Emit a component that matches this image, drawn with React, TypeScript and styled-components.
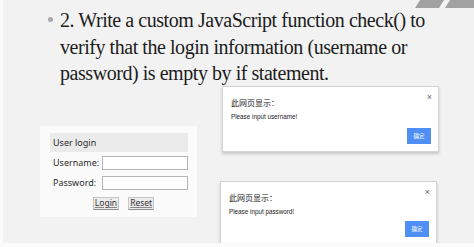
import styled, { createGlobalStyle } from "styled-components";

const GlobalStyle = createGlobalStyle`
  html, body {
    margin: 0;
    padding: 0;
    background: #ffffff;
  }
`;

const Slide = styled.div`
  position: relative;
  width: 474px;
  height: 247px;
  box-sizing: border-box;
  background: #f2f2f2;
  border-left: 3px solid #fbfbfb;
  border-bottom: 4px solid #fbfbfb;
  overflow: hidden;
  font-family: "Liberation Serif", "Times New Roman", serif;
`;

const Corner = styled.svg`
  position: absolute;
  top: 0;
  right: 0;
`;

const Bullet = styled.ul`
  margin: 0;
  padding: 7px 0 0 57px;
  list-style: none;
`;

const BulletItem = styled.li`
  position: relative;
  font-size: 20px;
  line-height: 26.5px;
  letter-spacing: -0.45px;
  color: #1c1c1c;
  white-space: nowrap;

  &::before {
    content: "";
    position: absolute;
    left: -12px;
    top: 10px;
    width: 5px;
    height: 5px;
    border-radius: 50%;
    background: #a9a9a9;
  }
`;

const Content = styled.div`
  display: flex;
  align-items: flex-start;
  margin-top: -1px;
`;

const LoginPanel = styled.div`
  width: 157px;
  height: 91px;
  box-sizing: border-box;
  margin: 40px 0 0 37px;
  padding: 7px 9px 0 10px;
  background: #fbfbfb;
  font-family: "Noto Sans", "Open Sans", sans-serif;
  color: #2a2a2a;
`;

const PanelHeader = styled.div`
  height: 19px;
  display: flex;
  align-items: center;
  padding-left: 3px;
  background: #ebebeb;
  font-size: 9px;
`;

const FieldRow = styled.div<{ $top: number }>`
  display: flex;
  align-items: center;
  justify-content: space-between;
  height: 14px;
  margin-top: ${(p) => p.$top}px;
  padding-left: 3px;
  font-size: 9px;
`;

const Input = styled.div`
  width: 84px;
  height: 12px;
  background: #ffffff;
  border: 1px solid #b5b5b5;
`;

const ButtonRow = styled.div`
  display: flex;
  justify-content: center;
  gap: 9px;
  margin-top: 7px;
  padding-left: 9px;
`;

const SmallButton = styled.button`
  height: 13px;
  padding: 0 1px;
  box-sizing: border-box;
  background: #ececec;
  border: 1px solid #c6c6c6;
  border-bottom-color: #8f8f8f;
  font-family: "Noto Sans", "Open Sans", sans-serif;
  font-size: 8.5px;
  line-height: 10px;
  color: #333;
  text-decoration: underline;
  text-decoration-color: #888;
`;

const Dialogs = styled.div`
  display: flex;
  flex-direction: column;
  gap: 29px;
  margin-left: 23px;
`;

const Dialog = styled.div<{ $shift: number; $height: number }>`
  position: relative;
  width: 217px;
  height: ${(p) => p.$height}px;
  box-sizing: border-box;
  margin-left: ${(p) => p.$shift}px;
  padding: 10px 7px 0 8px;
  background: #ffffff;
  border: 1px solid #d4d4d4;
  box-shadow: 0 2px 3px rgba(0, 0, 0, 0.18);
  display: flex;
  flex-direction: column;
`;

const Close = styled.span`
  position: absolute;
  top: 5px;
  right: 6px;
  font-family: "Liberation Sans", Arial, sans-serif;
  font-size: 9px;
  color: #666;
`;

const DialogTitle = styled.div`
  font-family: "Noto Sans CJK SC", sans-serif;
  font-size: 8px;
  line-height: 11px;
  color: #222;
`;

const DialogMessage = styled.div`
  margin-top: 5px;
  font-family: "Liberation Sans", Arial, sans-serif;
  font-size: 6.3px;
  line-height: 8px;
  color: #222;
`;

const OkButton = styled.div`
  align-self: flex-end;
  margin-top: auto;
  margin-bottom: 7px;
  width: 24px;
  height: 16px;
  display: flex;
  align-items: center;
  justify-content: center;
  background: #4f8ff4;
  color: #ffffff;
  font-family: "Noto Sans CJK SC", sans-serif;
  font-size: 5.5px;
`;

function App() {
  return (
    <>
      <GlobalStyle />
      <Slide>
        <Corner width="62" height="8" viewBox="0 0 62 8">
          <polygon points="8,0 32,0 27,8 3,8" fill="#a2a2a2" />
          <polygon points="38,0 62,0 62,8 33,8" fill="#a2a2a2" />
        </Corner>
        <Bullet>
          <BulletItem>
            2. Write a custom JavaScript function check() to
            <br />
            verify that the login information (username or
            <br />
            password) is empty by if statement.
          </BulletItem>
        </Bullet>
        <Content>
          <LoginPanel>
            <PanelHeader>User login</PanelHeader>
            <FieldRow $top={4}>
              Username:
              <Input />
            </FieldRow>
            <FieldRow $top={6}>
              Password:
              <Input />
            </FieldRow>
            <ButtonRow>
              <SmallButton>Login</SmallButton>
              <SmallButton>Reset</SmallButton>
            </ButtonRow>
          </LoginPanel>
          <Dialogs>
            <Dialog $shift={2} $height={66}>
              <Close>×</Close>
              <DialogTitle>此网页显示：</DialogTitle>
              <DialogMessage>Please input username!</DialogMessage>
              <OkButton>确定</OkButton>
            </Dialog>
            <Dialog $shift={0} $height={64}>
              <Close>×</Close>
              <DialogTitle>此网页显示：</DialogTitle>
              <DialogMessage>Please input password!</DialogMessage>
              <OkButton>确定</OkButton>
            </Dialog>
          </Dialogs>
        </Content>
      </Slide>
    </>
  );
}

export default App;
